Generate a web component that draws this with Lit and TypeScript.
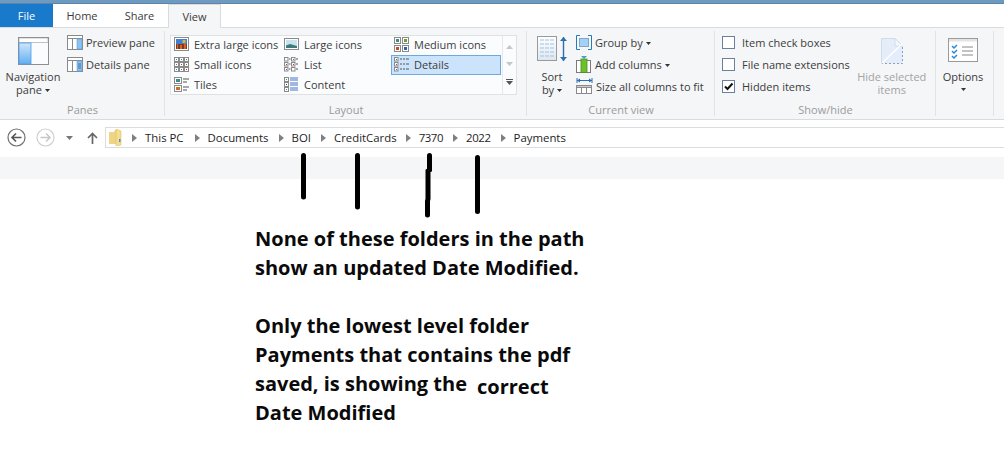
import { LitElement, html, css, svg } from "lit";
import { customElement } from "lit/decorators.js";
import { classMap } from "lit/directives/class-map.js";

const caret = html`<svg class="caret" width="5" height="3" viewBox="0 0 5 3"><path d="M0 0h5L2.500 3z" fill="#333"/></svg>`;

const ic = {
  nav: svg`<rect x=".5" y=".5" width="30" height="27" fill="#fbfcfe" stroke="#8f8f8f"/><rect x="1" y="1" width="29" height="4.500" fill="#fff" stroke="#9a9a9a" stroke-width=".6"/><defs><linearGradient id="ng" x1="0" y1="0" x2="0" y2="1"><stop offset="0" stop-color="#cfe6fb"/><stop offset="1" stop-color="#62aef2"/></linearGradient></defs><rect x="1" y="6" width="12" height="21" fill="url(#ng)" stroke="#4c9be8" stroke-width=".8"/>`,
  preview: svg`<rect x=".5" y=".5" width="15" height="14" fill="#fff" stroke="#8a8a8a"/><path d="M.5 3.500h15M5.500 3.500v11" stroke="#8a8a8a" fill="none"/><rect x="10" y="4" width="5" height="10" fill="#8ec0f0" stroke="#5b9fe0" stroke-width=".6"/>`,
  details: svg`<rect x=".5" y=".5" width="15" height="14" fill="#fff" stroke="#8a8a8a"/><path d="M.5 3.500h15M5.500 3.500v11" stroke="#8a8a8a" fill="none"/><rect x="10" y="4" width="5" height="10" fill="#8ec0f0" stroke="#5b9fe0" stroke-width=".6"/><path d="M11 7h3M11 9h3M11 11h3" stroke="#3f6fa5"/>`,
  xl: svg`<rect x=".5" y=".5" width="14" height="13" fill="#fff" stroke="#8a8a8a"/><rect x="2" y="2" width="11" height="5" fill="#3f7fd0"/><rect x="2" y="7" width="11" height="5" fill="#7a3a2a"/><path d="M3 12V7h1v5zM6 12V8h2v4zM10 12V7h2v5z" fill="#d8641e"/><rect x="8.500" y="3" width="3" height="3" fill="#e8b040"/>`,
  small: svg`<g fill="#fff" stroke="#8a8a8a"><rect x=".5" y=".5" width="4" height="4"/><rect x="5.500" y=".5" width="4" height="4"/><rect x="10.500" y=".5" width="4" height="4"/><rect x=".5" y="5.500" width="4" height="4"/><rect x="5.500" y="5.500" width="4" height="4"/><rect x="10.500" y="5.500" width="4" height="4"/><rect x=".5" y="10.500" width="4" height="4"/><rect x="5.500" y="10.500" width="4" height="4"/><rect x="10.500" y="10.500" width="4" height="4"/></g><path d="M2 2h1v1H2z" fill="#3a9a3a"/><path d="M7 2h1v1H7zM7 12h1v1H7zM2 12h1v1H2z" fill="#3a7ac8"/><path d="M12 2h1v1h-1zM12 12h1v1h-1zM7 7h1v1H7z" fill="#c83a2a"/><path d="M2 7h1v1H2zM12 7h1v1h-1z" fill="#3a9a3a"/>`,
  tiles: svg`<rect x=".5" y=".5" width="7" height="6" fill="#fff" stroke="#8a8a8a"/><rect x="2" y="2" width="4" height="3" fill="#3f8a8a"/><rect x=".5" y="8.500" width="7" height="6" fill="#fff" stroke="#8a8a8a"/><rect x="2" y="10" width="4" height="3" fill="#c8702a"/><path d="M9 2h6M9 5h4M9 10h6M9 13h4" stroke="#555"/>`,
  large: svg`<rect x=".5" y="1.500" width="14" height="11" fill="#fff" stroke="#8a8a8a"/><rect x="2" y="3" width="11" height="8" fill="#c6e4f0"/><path d="M2 11V8.500l4-1.500 7 2v2z" fill="#3f7a7a"/>`,
  list: svg`<g fill="#fff" stroke="#8a8a8a"><rect x=".5" y=".5" width="3.500" height="3.500"/><rect x=".5" y="5.500" width="3.500" height="3.500"/><rect x=".5" y="10.500" width="3.500" height="3.500"/><rect x="7.500" y=".5" width="3.500" height="3.500"/><rect x="7.500" y="5.500" width="3.500" height="3.500"/><rect x="7.500" y="10.500" width="3.500" height="3.500"/></g><path d="M5 2h1.500M5 7h1.500M5 12h1.500M12 2h2M12 7h2M12 12h2" stroke="#555"/><path d="M2 7h1v1H2zM9 7h1v1H9z" fill="#c83a2a"/><path d="M2 12h1v1H2zM9 2h1v1H9z" fill="#3a7ac8"/>`,
  content: svg`<g fill="#fff" stroke="#8a8a8a"><rect x=".5" y=".5" width="4" height="4"/><rect x=".5" y="5.500" width="4" height="4"/><rect x=".5" y="10.500" width="4" height="4"/></g><path d="M6 1h8M6 3h8M6 6h8M6 8h8M6 11h8M6 13h8" stroke="#4472c4"/><path d="M2 2h1v1H2z" fill="#3a9a3a"/><path d="M2 7h1v1H2z" fill="#444"/><path d="M2 12h1v1H2z" fill="#3a7ac8"/>`,
  medium: svg`<g fill="#fff" stroke="#8a8a8a"><rect x=".5" y=".5" width="6" height="6"/><rect x="8.500" y=".5" width="6" height="6"/><rect x=".5" y="8.500" width="6" height="6"/><rect x="8.500" y="8.500" width="6" height="6"/></g><rect x="2" y="2" width="3" height="3" fill="#3f8a8a"/><rect x="10" y="2" width="3" height="3" fill="#6aa030"/><rect x="2" y="10" width="3" height="3" fill="#c0501e"/><rect x="10" y="10" width="3" height="3" fill="#2f5fb0"/>`,
  det: svg`<g fill="#fff" stroke="#8a8a8a"><rect x=".5" y=".5" width="3.500" height="3.500"/><rect x=".5" y="5.500" width="3.500" height="3.500"/><rect x=".5" y="10.500" width="3.500" height="3.500"/></g><path d="M6 2h2M9 2h2M12 2h3M6 7h2M9 7h2M12 7h3M6 12h2M9 12h2M12 12h3" stroke="#555"/><path d="M2 2h1v1H2z" fill="#3a9a3a"/><path d="M2 7h1v1H2z" fill="#c83a2a"/><path d="M2 12h1v1H2z" fill="#3a7ac8"/>`,
  sort: svg`<defs><linearGradient id="sg" x1="0" y1="0" x2="0" y2="1"><stop offset="0" stop-color="#fff"/><stop offset="1" stop-color="#dfe6ee"/></linearGradient></defs><rect x=".5" y=".5" width="19" height="24" fill="url(#sg)" stroke="#9a9a9a"/><path d="M3 4h14M3 8h14M3 12h14M3 16h14M3 20h14" stroke="#9cc3ea" stroke-dasharray="4 1"/><path d="M26.500 1v24" stroke="#2a6fb0" stroke-width="1.400"/><path d="M23 5l3.500-4 3.500 4zM23 21l3.500 4 3.500-4z" fill="#2a6fb0"/>`,
  group: svg`<path d="M4 .5H.5v14H4M12 .5h3.500v14H12" fill="none" stroke="#2a7ab8"/><rect x="3.500" y="3.500" width="9" height="8" fill="#a8d0f4" stroke="#7fa8cc"/>`,
  addcol: svg`<path d="M5 0h6L8 3z" fill="#4a9ad8"/><rect x=".5" y="4.500" width="14" height="12" fill="#fff" stroke="#7a7a7a"/><rect x="5" y="3" width="6" height="13.500" fill="#6cc02c" stroke="#4c9020" stroke-width=".8"/>`,
  size: svg`<path d="M1 0v5M16 0v5" stroke="#2a6fb0"/><path d="M1 2.500h15" stroke="#2a6fb0"/><path d="M1 2.500l3-2v4zM16 2.500l-3-2v4z" fill="#2a6fb0"/><rect x=".5" y="7.500" width="15" height="8" fill="#fff" stroke="#8a8a8a"/><rect x=".5" y="7.500" width="15" height="2" fill="#ccc" stroke="#8a8a8a"/><path d="M5.500 9v7M10.500 9v7" stroke="#8a8a8a"/>`,
  hide: svg`<path d="M.5 25.500V.5H14L21.500 8v17.500z" fill="#e4edf9"/><path d="M.5 25.500V.5H14L21.500 8" fill="none" stroke="#cfdcec"/><path d="M14 .5V8h7.500z" fill="#f4f8fd" stroke="#cfdcec"/><path d="M21.500 9v16.500H1" fill="none" stroke="#8aa0ba" stroke-dasharray="2 2"/><path d="M1 25L21 6" stroke="#fff" stroke-width="1.500"/>`,
  options: svg`<rect x=".5" y=".5" width="29" height="23" fill="#fff" stroke="#9a9a9a"/><rect x="1" y="1" width="28" height="2.500" fill="#e4e4e4"/><path d="M14 9h11M14 13h11M14 17h11" stroke="#888"/><path d="M4 8l2 2 3-3M4 13l2 2 3-3M4 18l2 2 3-3" fill="none" stroke="#2a8ad8" stroke-width="1.500"/>`,
};

const icon = (body: unknown, w: number, h: number) =>
  html`<svg class="ic" width=${w} height=${h} viewBox="0 0 ${w} ${h}">${body}</svg>`;

const crumbs = ["This PC", "Documents", "BOI", "CreditCards", "7370", "2022", "Payments"];

@customElement("app-root")
export class AppRoot extends LitElement {
  static styles = css`
    :host {
      display: block;
      position: relative;
      width: 1004px;
      height: 450px;
      overflow: hidden;
      background: #fff;
      font-family: "Open Sans", "Noto Sans", sans-serif;
      font-size: 11px;
      color: #3c3c3c;
    }
    .ic { display: block; flex: none; }
    .caret { display: inline-block; margin-left: 3px; vertical-align: 2px; }
    .sliver { height: 4px; background: #6f9abf; box-shadow: inset 0 -1px 0 #5a86ac; }
    .tabs { display: flex; height: 23px; background: #fff; border-bottom: 1px solid #dadbdc; }
    .tab { display: flex; align-items: center; justify-content: center; font-size: 11px; color: #3b3b3b; }
    .tab.file { width: 53px; background: #1979ca; color: #fff; }
    .tab.home { width: 58px; }
    .tab.share { width: 57px; }
    .tab.view {
      width: 53px; height: 24px; background: #f5f6f7; box-sizing: border-box;
      border: 1px solid #dadbdc; border-bottom: none;
    }
    .ribbon { display: flex; height: 91px; background: #f5f6f7; border-bottom: 1px solid #dadbdc; }
    .group { display: flex; flex-direction: column; flex: none; position: relative; }
    .group::after {
      content: ""; position: absolute; right: 0; top: 3px; bottom: 3px; width: 1px; background: #e2e3e4;
    }
    .body { flex: 1; display: flex; }
    .label { height: 16px; line-height: 14px; text-align: center; color: #9a9a9a; font-size: 11px; }
    .panes { width: 165px; }
    .panes .body { padding: 3px 0 0 3px; }
    .big { display: flex; flex-direction: column; align-items: center; line-height: 13px; text-align: center; color: #3c3c3c; }
    .nav { width: 60px; }
    .nav .ic { margin: 6px 0 5px; }
    .stack { display: flex; flex-direction: column; }
    .row { display: flex; align-items: center; gap: 3px; height: 22px; white-space: nowrap; }
    .panes .stack { margin-left: 4px; }
    .layout { width: 362px; }
    .layout .body { padding: 7px 0 0 5px; }
    .gallery {
      display: flex; width: 347px; height: 60px; box-sizing: border-box;
      border: 1px solid #e0e1e2; background: #fbfcfe;
    }
    .grid { width: 331px; margin-top: -1px; display: grid; grid-template-columns: 110px 110px 110px; grid-auto-rows: 20px; }
    .cell { display: flex; align-items: center; gap: 5px; padding: 0 0 2px 3px; box-sizing: border-box; white-space: nowrap; }
    .cell.on { background: #cce4fb; border: 1px solid #6da8e0; padding: 0 0 1px 2px; }
    .scroll { flex: 1; border-left: 1px solid #e6e7e8; display: flex; flex-direction: column; align-items: center; justify-content: space-around; padding: 3px 0; box-sizing: border-box; }
    .current { width: 188px; }
    .current .body { padding: 3px 0 0 10px; }
    .sort { width: 30px; margin-top: 5px; }
    .sort .ic { margin-bottom: 8px; }
    .current .stack { margin-left: 9px; }
    .current .row { gap: 3px; }
    .show { width: 221px; }
    .show .body { padding: 3px 0 0 7px; }
    .show .row { gap: 7px; }
    .box { width: 13px; height: 13px; box-sizing: border-box; border: 1px solid #6d7f9c; background: #fff; display: flex; flex: none; }
    .hidebtn { width: 76px; margin-left: 4px; color: #a3a3a3; margin-top: 7px; }
    .hidebtn .ic { margin-bottom: 6px; }
    .options { width: 58px; }
    .options .body { justify-content: center; padding: 10px 4px 0 0; }
    .options .ic { margin-bottom: 8px; }
    .options .caret { margin: 5px 0 0; }
    .addr { display: flex; align-items: center; height: 21px; padding: 7px 0 0 7px; }
    .nbtn { flex: none; display: flex; justify-content: center; }
    .nbtn.round { width: 19px; }
    .nbtn.fwd { margin-left: 10px; }
    .nbtn.recent { width: 9px; margin-left: 10px; }
    .nbtn.up { width: 12px; margin-left: 12px; }
    .pathbox {
      flex: 1; display: flex; align-items: center; height: 21px; box-sizing: border-box;
      margin-left: 7px; padding-left: 3px; border: 1px solid #dcdcdc; border-right: none; color: #1e1e1e;
      font-size: 11.4px;
    }
    .crumb { display: flex; align-items: center; white-space: nowrap; margin-left: 10px; }
    .crumb:nth-of-type(2) { margin-left: 11px; }
    .crumb:nth-of-type(5) { margin-left: 9px; }
    .crumb.num { letter-spacing: -0.4px; }
    .sep { flex: none; margin-right: 8px; }
    .band { height: 22px; margin-top: 9px; background: #f5f6f8; }
    .note {
      margin: 45px 0 0 255px; font-size: 20px; font-weight: 700; line-height: 29px; color: #0a0a0a;
      font-family: "Open Sans", sans-serif;
    }
    .correct { margin-left: 10px; display: inline-block; transform: translateY(3px); }
    .marks { position: absolute; left: 0; top: 0; pointer-events: none; }
  `;

  render() {
    return html`
      <div class="sliver"></div>
      <div class="tabs">
        <div class="tab file">File</div>
        <div class="tab home">Home</div>
        <div class="tab share">Share</div>
        <div class="tab view">View</div>
      </div>
      <div class="ribbon">
        <div class="group panes">
          <div class="body">
            <div class="big nav">${icon(ic.nav, 31, 28)}<span>Navigation</span><span>pane${caret}</span></div>
            <div class="stack">
              <div class="row">${icon(ic.preview, 16, 15)}Preview pane</div>
              <div class="row">${icon(ic.details, 16, 15)}Details pane</div>
            </div>
          </div>
          <div class="label">Panes</div>
        </div>
        <div class="group layout">
          <div class="body">
            <div class="gallery">
              <div class="grid">
                <div class="cell">${icon(ic.xl, 15, 15)}Extra large icons</div>
                <div class="cell">${icon(ic.large, 15, 15)}Large icons</div>
                <div class="cell">${icon(ic.medium, 15, 15)}Medium icons</div>
                <div class="cell">${icon(ic.small, 15, 15)}Small icons</div>
                <div class="cell">${icon(ic.list, 15, 15)}List</div>
                <div class="cell on">${icon(ic.det, 15, 15)}Details</div>
                <div class="cell">${icon(ic.tiles, 15, 15)}Tiles</div>
                <div class="cell">${icon(ic.content, 15, 15)}Content</div>
              </div>
              <div class="scroll">
                <svg width="7" height="4" viewBox="0 0 7 4"><path d="M3.500 0L7 4H0z" fill="#c4c6c9"/></svg>
                <svg width="7" height="4" viewBox="0 0 7 4"><path d="M0 0h7L3.500 4z" fill="#c4c6c9"/></svg>
                <svg width="7" height="6" viewBox="0 0 7 6"><path d="M0 0h7v1H0zM0 2h7L3.500 6z" fill="#555"/></svg>
              </div>
            </div>
          </div>
          <div class="label">Layout</div>
        </div>
        <div class="group current">
          <div class="body">
            <div class="big sort">${icon(ic.sort, 31, 26)}<span>Sort</span><span>by${caret}</span></div>
            <div class="stack">
              <div class="row">${icon(ic.group, 16, 15)}<span>Group by${caret}</span></div>
              <div class="row">${icon(ic.addcol, 16, 17)}<span>Add columns${caret}</span></div>
              <div class="row">${icon(ic.size, 17, 16)}Size all columns to fit</div>
            </div>
          </div>
          <div class="label">Current view</div>
        </div>
        <div class="group show">
          <div class="body">
            <div class="stack">
              <div class="row"><span class="box"></span>Item check boxes</div>
              <div class="row"><span class="box"></span>File name extensions</div>
              <div class="row">
                <span class="box"><svg width="11" height="11" viewBox="0 0 11 11"><path d="M2 5.500l2.500 2.500L9.500 2.500" fill="none" stroke="#111" stroke-width="2"/></svg></span>
                Hidden items
              </div>
            </div>
            <div class="big hidebtn">${icon(ic.hide, 22, 26)}<span>Hide selected</span><span>items</span></div>
          </div>
          <div class="label">Show/hide</div>
        </div>
        <div class="group options">
          <div class="body">
            <div class="big">${icon(ic.options, 30, 24)}<span>Options</span>${caret}</div>
          </div>
        </div>
      </div>
      <div class="addr">
        <div class="nbtn round">
          <svg width="19" height="19" viewBox="0 0 19 19"><circle cx="9.500" cy="9.500" r="8.500" fill="#fff" stroke="#6f6f6f" stroke-width="1.200"/><path d="M14.500 9.500H5M9 5.500L5 9.500l4 4" fill="none" stroke="#555" stroke-width="1.600"/></svg>
        </div>
        <div class="nbtn round fwd">
          <svg width="19" height="19" viewBox="0 0 19 19"><circle cx="9.500" cy="9.500" r="8.500" fill="#fff" stroke="#cfcfcf" stroke-width="1.200"/><path d="M4.500 9.500H14M10 5.500l4 4-4 4" fill="none" stroke="#c8c8c8" stroke-width="1.600"/></svg>
        </div>
        <div class="nbtn recent">
          <svg width="7" height="4" viewBox="0 0 7 4"><path d="M0 0h7L3.500 4z" fill="#777"/></svg>
        </div>
        <div class="nbtn up">
          <svg width="11" height="12" viewBox="0 0 11 12"><path d="M5.500 12V1.500M1 6l4.500-4.500L10 6" fill="none" stroke="#666" stroke-width="1.700"/></svg>
        </div>
        <div class="pathbox">
          <svg class="ic" width="13" height="17" viewBox="0 0 13 17"><path d="M0 3h5l1-2h3v14H0z" fill="#eed484"/><path d="M7 0l5 2v14l-5 1z" fill="#f5dd8e" stroke="#d8b850" stroke-width=".5"/><rect x="10" y="10" width="1.500" height="3" fill="#4a90d0"/></svg>
          ${crumbs.map((t) => html`
            <span class=${classMap({ crumb: true, num: /^\d+$/.test(t) })}>
              <svg class="sep" width="5" height="8" viewBox="0 0 5 8"><path d="M0 0l5 4-5 4z" fill="#808080"/></svg>${t}
            </span>`)}
        </div>
      </div>
      <div class="band"></div>
      <div class="note">
        None of these folders in the path<br />
        show an updated Date Modified.<br />
        <br />
        Only the lowest level folder<br />
        Payments that contains the pdf<br />
        saved, is showing the<span class="correct">correct</span><br />
        Date Modified
      </div>
      <svg class="marks" width="1004" height="450" viewBox="0 0 1004 450" fill="none" stroke="#000" stroke-width="5" stroke-linecap="round">
        <path d="M303.500 155.500V197" />
        <path d="M357.500 155.500V207" />
        <path d="M429.500 155.500V170L428 171V199L427.500 201V215" />
        <path d="M477.500 157.500V211.500" />
      </svg>
    `;
  }
}
